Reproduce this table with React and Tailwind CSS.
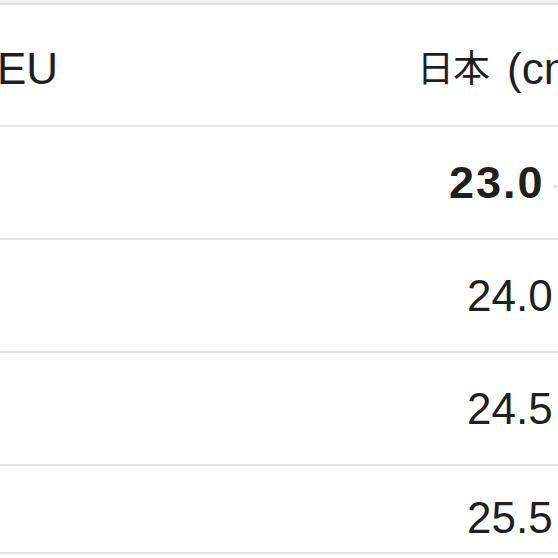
import React from 'react';

const rows = [
  { jp: '23.0', bold: true },
  { jp: '24.0' },
  { jp: '24.5' },
  { jp: '25.5', last: true },
];

export default function App() {
  return (
    <div
      className="w-[558px] h-[558px] overflow-hidden bg-white text-[#1f1f1f]"
      style={{ fontFamily: '"Liberation Sans", "Noto Sans CJK JP", sans-serif' }}
    >
      <div className="h-[3px] bg-[#f3f3f3]" />
      <div className="border-t-2 border-[#e2e2e2]">
        {/* header */}
        <div className="flex items-center h-[122px] pt-[8px] whitespace-nowrap text-[44px] leading-none border-b-2 border-[#e4e4e4]">
          <div className="w-[420px] shrink-0 -ml-[3px]">EU</div>
          <div className="shrink-0 flex items-center">
            <span className="text-[37px] tracking-[-1px]">日本</span>
            <span className="ml-[18px]">(cm)</span>
          </div>
        </div>

        {rows.map((r) => (
          <div
            key={r.jp}
            className={
              r.last
                ? 'flex items-center h-[88px] pt-[18px] whitespace-nowrap text-[44px] leading-none border-b-2 border-[#e4e4e4]'
                : 'flex items-center h-[113px] whitespace-nowrap text-[44px] leading-none border-b-2 border-[#e4e4e4]'
            }
          >
            <div className="w-[420px] shrink-0" />
            {r.bold ? (
              <div className="ml-[29px] shrink-0 font-bold tracking-[2px] text-[45px]">
                {r.jp}
                <span className="ml-[8px] text-[#e0e0e0] text-[20px] align-middle">·</span>
              </div>
            ) : (
              <div className="ml-[47px] shrink-0">{r.jp}</div>
            )}
          </div>
        ))}
      </div>
    </div>
  );
}
